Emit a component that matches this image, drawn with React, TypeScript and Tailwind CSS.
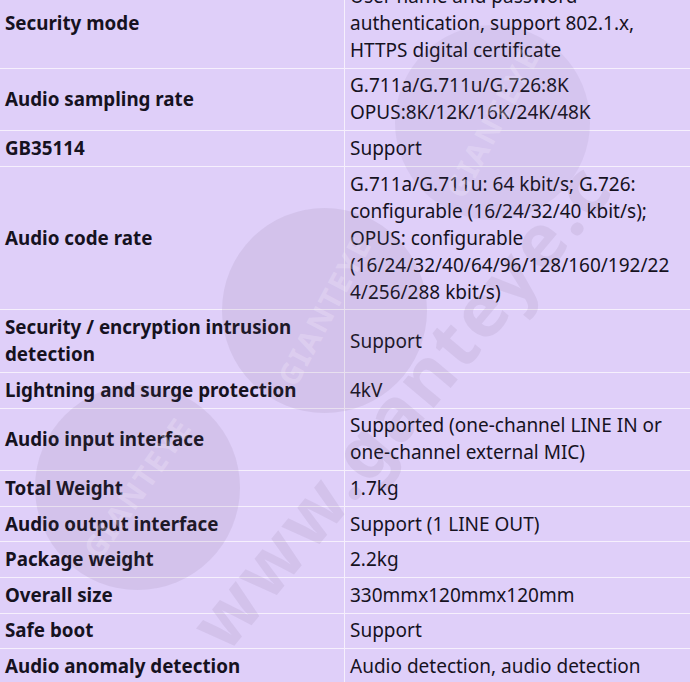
const rows: [string, string[]][] = [
  ["Security mode", ["User name and password", "authentication, support 802.1.x,", "HTTPS digital certificate"]],
  ["Audio sampling rate", ["G.711a/G.711u/G.726:8K", "OPUS:8K/12K/16K/24K/48K"]],
  ["GB35114", ["Support"]],
  [
    "Audio code rate",
    [
      "G.711a/G.711u: 64 kbit/s; G.726:",
      "configurable (16/24/32/40 kbit/s);",
      "OPUS: configurable",
      "(16/24/32/40/64/96/128/160/192/22",
      "4/256/288 kbit/s)",
    ],
  ],
  ["Security / encryption intrusion detection", ["Support"]],
  ["Lightning and surge protection", ["4kV"]],
  ["Audio input interface", ["Supported (one-channel LINE IN or", "one-channel external MIC)"]],
  ["Total Weight", ["1.7kg"]],
  ["Audio output interface", ["Support (1 LINE OUT)"]],
  ["Package weight", ["2.2kg"]],
  ["Overall size", ["330mmx120mmx120mm"]],
  ["Safe boot", ["Support"]],
  ["Audio anomaly detection", ["Audio detection, audio detection"]],
]

// faint site watermark that sits over the table
function Watermark() {
  return (
    <div className="pointer-events-none absolute inset-0 overflow-hidden">
      <div className="absolute left-[222px] top-[208px] flex h-[205px] w-[205px] items-center justify-center rounded-full bg-[#6b5a7a]/10">
        <span className="-rotate-[62deg] text-[30px] font-bold tracking-[2px] text-[#f3ecfb]/30">GIANTEYE</span>
      </div>
      <div className="absolute left-[395px] top-[25px] flex h-[195px] w-[195px] items-center justify-center rounded-full bg-[#6b5a7a]/8">
        <span className="-rotate-[62deg] text-[30px] font-bold tracking-[2px] text-[#f3ecfb]/30">GIANTEYE</span>
      </div>
      <div className="absolute left-[35px] top-[385px] flex h-[205px] w-[205px] items-center justify-center rounded-full bg-[#6b5a7a]/10">
        <span className="-rotate-[55deg] text-[30px] font-bold tracking-[2px] text-[#f3ecfb]/30">GIANTEYE</span>
      </div>
      <div className="absolute left-[205px] top-[600px] w-[620px] origin-left -rotate-[50deg] text-[74px] font-bold leading-none tracking-[3px] text-[#6b5a7a]/10">
        www.ganteye.c
      </div>
    </div>
  )
}

export default function App() {
  return (
    <div className="relative h-[682px] w-[690px] overflow-hidden bg-[#dfcff9] font-['Noto_Sans','Open_Sans',sans-serif] text-[19px] leading-[27px] text-[#16121f]">
      <div className="-mt-[21px] flex flex-col">
        {rows.map(([label, value]) => (
          <div key={label} className="flex border-b border-[#f6f0fd]">
            <div className="flex w-[345px] shrink-0 items-center border-r border-[#f6f0fd] px-[5px] py-[3.8px] text-[18.8px] font-bold">
              {label}
            </div>
            <div className="flex flex-1 flex-col justify-center whitespace-nowrap px-[5px] py-[3.8px]">
              {value.map((line) => (
                <div key={line}>{line}</div>
              ))}
            </div>
          </div>
        ))}
      </div>
      <Watermark />
    </div>
  )
}
